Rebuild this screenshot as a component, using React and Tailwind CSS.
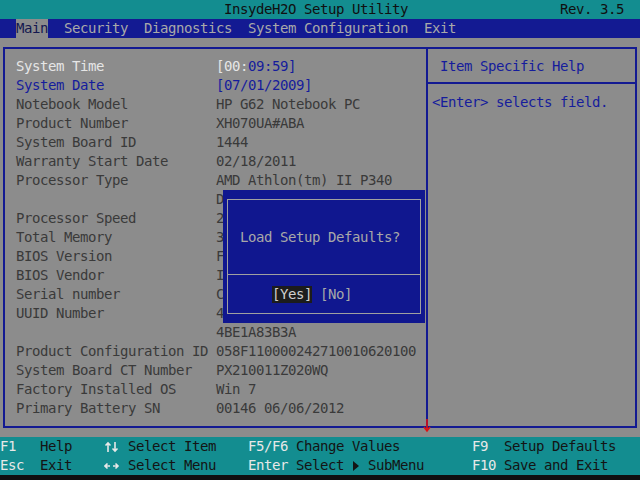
import React from "react";

const rows = [
  ["Notebook Model", "HP G62 Notebook PC"],
  ["Product Number", "XH070UA#ABA"],
  ["System Board ID", "1444"],
  ["Warranty Start Date", "02/18/2011"],
  ["Processor Type", "AMD Athlon(tm) II P340"],
  ["", "Dual-Core Processor"],
  ["Processor Speed", "2200 MHz"],
  ["Total Memory", "3072 MB"],
  ["BIOS Version", "F.27"],
  ["BIOS Vendor", "Insyde"],
  ["Serial number", "CNF0123ABC"],
  ["UUID Number", "4A3C2B1D5E6F7A8B9C0D1E2F3"],
  ["", "4BE1A83B3A"],
  ["Product Configuration ID", "058F110000242710010620100"],
  ["System Board CT Number", "PX210011Z020WQ"],
  ["Factory Installed OS", "Win 7"],
  ["Primary Battery SN", "00146 06/06/2012"],
];

function UpDown() {
  return (
    <svg width="16" height="19" viewBox="0 0 16 19" className="block">
      <path d="M4 6 L4 15 M1.5 8.5 L4 6 L6.5 8.5" stroke="#e8e8e8" strokeWidth="1.6" fill="none" />
      <path d="M11 5 L11 14 M8.5 11.5 L11 14 L13.5 11.5" stroke="#e8e8e8" strokeWidth="1.6" fill="none" />
    </svg>
  );
}

function LeftRight() {
  return (
    <svg width="16" height="19" viewBox="0 0 16 19" className="block">
      <path d="M1 10 L6 10 M3.5 7.5 L1 10 L3.5 12.5" stroke="#e8e8e8" strokeWidth="1.6" fill="none" />
      <path d="M9 10 L14 10 M11.5 7.5 L14 10 L11.5 12.5" stroke="#e8e8e8" strokeWidth="1.6" fill="none" />
    </svg>
  );
}

function Tri() {
  return (
    <svg width="8" height="19" viewBox="0 0 8 19" className="block">
      <path d="M1 5 L7 10 L1 15 Z" fill="#141414" />
    </svg>
  );
}

export default function App() {
  return (
    <div className="relative w-[640px] h-[480px] bg-[#8c8c8c] flex flex-col overflow-hidden font-['DejaVu_Sans_Mono',monospace] text-[14px] tracking-[-0.428px] leading-[19px] whitespace-pre">
      {/* Title bar */}
      <div className="h-[19px] bg-[#138d90] flex text-[#101010]">
        <span className="pl-[224px]">InsydeH2O Setup Utility</span>
        <span className="ml-auto pr-[16px]">Rev. 3.5</span>
      </div>
      {/* Menu bar */}
      <div className="h-[19px] bg-[#131a92] flex gap-4 pl-4 text-[#a9a9a9]">
        <span className="bg-[#8c8c8c] text-[#141850]">Main</span>
        <span>Security</span>
        <span>Diagnostics</span>
        <span>System Configuration</span>
        <span>Exit</span>
      </div>
      {/* Main box */}
      <div className="mx-[3px] mt-[9px] h-[381px] border-2 border-[#131a92] flex">
        <div className="w-[421px] pt-[8px] pl-[11px] flex flex-col text-[#3a3a3a]">
          <div className="flex">
            <span className="w-[200px] text-[#e6e6e6]">System Time</span>
            <span>
              <span className="text-[#e6e6e6]">[00:</span>
              <span className="text-[#151c9c]">09:59]</span>
            </span>
          </div>
          <div className="flex text-[#151c9c]">
            <span className="w-[200px]">System Date</span>
            <span>[07/01/2009]</span>
          </div>
          {rows.map(([l, v], i) => (
            <div key={i} className="flex">
              <span className="w-[200px]">{l}</span>
              <span>{v}</span>
            </div>
          ))}
        </div>
        <div className="flex-1 border-l-2 border-[#131a92] flex flex-col text-[#151c9c]">
          <div className="h-[35px] border-b-2 border-[#131a92] pl-[12px] pt-[8px]">Item Specific Help</div>
          <div className="pl-[4px] pt-[9px]">{"<Enter> selects field."}</div>
        </div>
      </div>
      {/* Bottom bar */}
      <div className="mt-[9px] h-[38px] bg-[#138d90] flex flex-col text-[#141414]">
        <div className="flex h-[19px]">
          <span className="w-[40px] text-[#e8e8e8]">F1</span>
          <span className="w-[64px]">Help</span>
          <span className="w-[24px]"><UpDown /></span>
          <span className="w-[120px]">Select Item</span>
          <span className="w-[48px] text-[#e8e8e8]">F5/F6</span>
          <span className="w-[176px]">Change Values</span>
          <span className="w-[32px] text-[#e8e8e8]">F9</span>
          <span>Setup Defaults</span>
        </div>
        <div className="flex h-[19px]">
          <span className="w-[40px] text-[#e8e8e8]">Esc</span>
          <span className="w-[64px]">Exit</span>
          <span className="w-[24px]"><LeftRight /></span>
          <span className="w-[120px]">Select Menu</span>
          <span className="w-[48px] text-[#e8e8e8]">Enter</span>
          <span className="w-[176px] flex">
            <span className="w-[56px]">Select</span>
            <span className="w-[16px]"><Tri /></span>
            <span>SubMenu</span>
          </span>
          <span className="w-[32px] text-[#e8e8e8]">F10</span>
          <span>Save and Exit</span>
        </div>
      </div>
      <div className="flex-1 bg-[#101010]" />

      {/* Red scroll arrow */}
      <svg width="8" height="14" viewBox="0 0 8 14" className="absolute left-[423px] top-[419px]">
        <path d="M4 0 L4 11 M1 8 L4 12 L7 8" stroke="#e01010" strokeWidth="1.6" fill="none" />
      </svg>

      {/* Dialog */}
      <div className="absolute left-[223px] top-[190px] w-[202px] h-[133px] bg-[#10178f] pt-[9px] px-[4px] pb-[9px]">
        <div className="h-full border border-[#a0a0a0] flex flex-col text-[#a8a8a8]">
          <div className="h-[75px] border-b border-[#a0a0a0] flex items-center pl-[12px]">Load Setup Defaults?</div>
          <div className="flex-1 flex items-center pl-[44px]">
            <span className="bg-[#1c1c1c] text-[#cfcfcf] leading-[17px]">[Yes]</span>
            <span className="ml-[8px]">[No]</span>
          </div>
        </div>
      </div>
    </div>
  );
}
